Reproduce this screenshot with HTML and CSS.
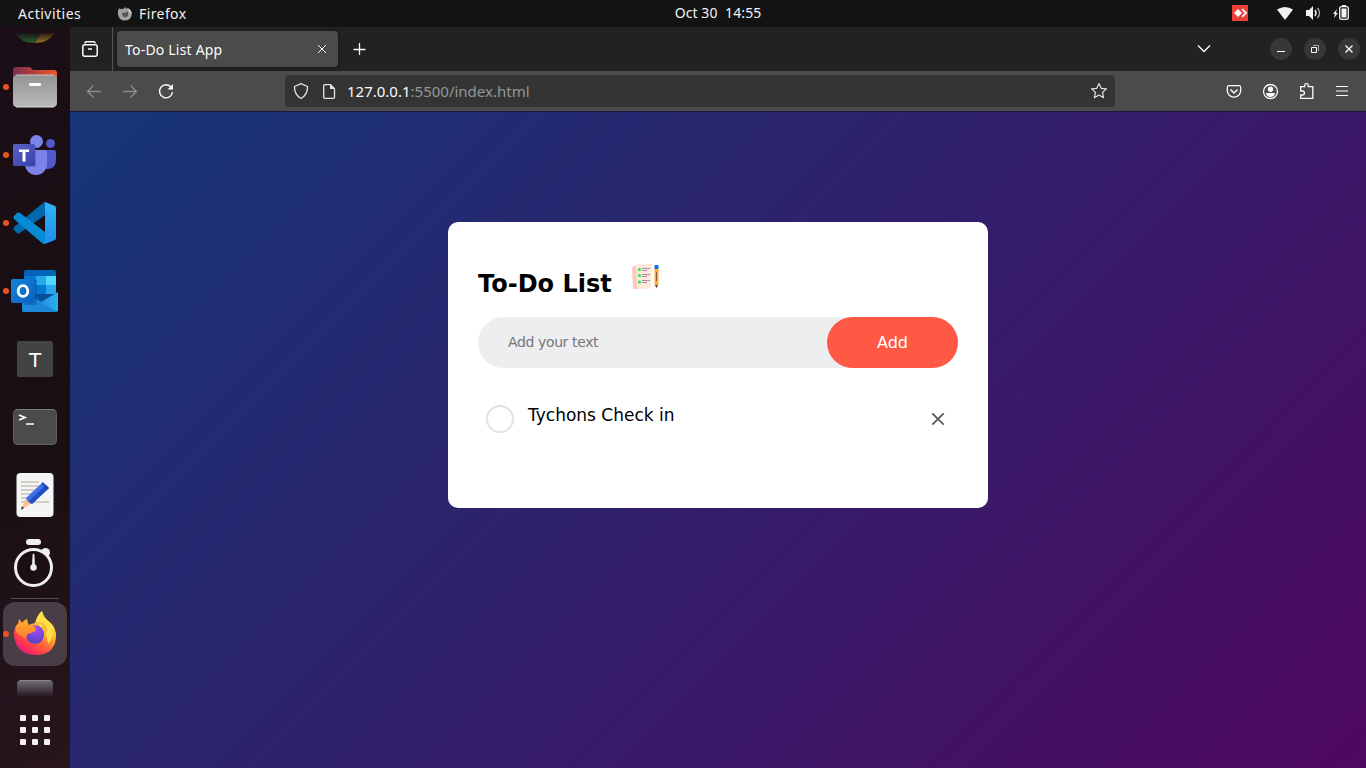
FILE: index.html
```html
<!DOCTYPE html>
<html lang="en">
<head>
<meta charset="utf-8">
<title>To-Do List App</title>
<link rel="stylesheet" href="styles.css">
</head>
<body>
<div class="desktop">
  <header class="topbar">
    <div class="topbar-left">
      <span class="activities">Activities</span>
      <svg class="app-icon" width="16" height="16" viewBox="0 0 16 16"><path d="M1 5 2.200 2l1 1.300L5 2.500l1 .9L8 1c.5 1.200 1.300 1.600 2 2l1-1c3 2 4 4 3.700 7A6.800 6.300 0 0 1 1.300 9.600C.8 8 1 6.500 1 5Z" fill="#a2a2a2"/><path d="M5 6.500 8 7l2-2c2 2.500 1.500 6-1.700 6.200C6 11.300 5 9 5 6.500Z" fill="#555"/><path d="m9 1 5 4 .7 3-2-1-1-3Z" fill="#d8d8d8"/></svg>
      <span class="app-name">Firefox</span>
    </div>
    <time class="clock">Oct 30&nbsp; 14:55</time>
    <div class="topbar-right">
      <svg width="134" height="27" viewBox="1232 0 134 27">
        <path fill="#ef3e36" d="M1232 5h16v16h-16z"/><path fill="#fff" d="m1238 9 4 4-4 4-4-4Zm3.500.7 1.200-1.200 4.500 4.500-4.500 4.500-1.200-1.200 3.200-3.300Z"/>
        <path fill="#f2f2f2" d="M1277 9.500q8-5 16 0L1285 20Z"/>
        <path fill="#f2f2f2" d="M1306 10h3l4-4v14l-4-4h-3Z"/><path d="M1315 10q2 3 0 6" fill="none" stroke="#eee" stroke-width="1.500"/><path d="M1317.500 8q4 5 0 10" fill="none" stroke="#aaa" stroke-width="1.300"/>
        <path fill="#f2f2f2" d="m1337 9-4 5h2l-1 4 4-5h-2Z"/><rect x="1339.700" y="6.700" width="8.600" height="12.600" rx="2" fill="none" stroke="#f2f2f2" stroke-width="1.300"/><path fill="#f2f2f2" d="M1341.500 8.500h5v9h-5zM1342 5h4v1.500h-4z"/>
      </svg>
    </div>
  </header>
  <div class="workspace">
    <nav class="dock">
      <svg class="dock-partial" width="70" height="26" viewBox="0 27 70 26"><defs><linearGradient id="fade" x1="0" y1="0" x2="0" y2="1"><stop offset="0" stop-color="#1b0f16"/><stop offset="1" stop-color="#1b0f16" stop-opacity="0"/></linearGradient></defs><path d="M15 33h26l-6 10q-13 1-20-10Z" fill="#24502b"/><path d="M41 33h14q-7 10-20 10Z" fill="#886223"/><path fill="url(#fade)" d="M14 32h43v9H14z"/></svg>
      <svg class="dock-icon" width="70" height="68" viewBox="0 53 70 68"><defs><linearGradient id="fold" x1="0" x2="1"><stop stop-color="#7c2c52"/><stop offset="1" stop-color="#ee5825"/></linearGradient><linearGradient id="front" x2="0" y2="1"><stop stop-color="#939393"/><stop offset="1" stop-color="#bababa"/></linearGradient></defs><circle class="dot" cx="6" cy="87" r="3"/><path d="M13 80V70q0-3 3-3h14l3 3h21q3 0 3 3v8Z" fill="url(#fold)"/><rect x="13" y="75" width="44" height="32" rx="4" fill="url(#front)"/><path d="M16 75h38" stroke="#c4c4c4"/><path d="M16 107h38" stroke="#ddd"/><rect x="29" y="83" width="12" height="3" rx="1" fill="#fff"/></svg>
      <svg class="dock-icon" width="70" height="68" viewBox="0 121 70 68"><defs><linearGradient id="tsq" x2="1" y2="1"><stop stop-color="#5a62c3"/><stop offset="1" stop-color="#3940ab"/></linearGradient></defs><circle class="dot" cx="6" cy="155" r="3"/><circle cx="50.500" cy="143.500" r="4.500" fill="#5059c9"/><path d="M43 150h11q2 0 2 2v8q0 9-9 9-4 0-6-3Z" fill="#5059c9"/><circle cx="36.500" cy="141.500" r="6.500" fill="#7b83eb"/><path d="M27 150h18q2 0 2 2v12a11 11 0 0 1-22 0v-12Z" fill="#7b83eb"/><path d="M26 146h10v21H26Z" fill="#414aad" opacity=".35"/><rect x="13" y="144" width="22" height="22" rx="1.500" fill="url(#tsq)"/><path d="M19 149.500h10v2.500h-3.500v9.500h-3V152H19Z" fill="#fff"/></svg>
      <svg class="dock-icon" width="70" height="68" viewBox="0 189 70 68"><defs><linearGradient id="vsc" x2="0" y2="1"><stop stop-color="#32b3f8"/><stop offset="1" stop-color="#1b8eea"/></linearGradient></defs><circle class="dot" cx="6" cy="223" r="3"/><path d="M43 203q1-1 2-1v13L20 233q-2 1-3 0l-3-3q-1-1 0-3Z" fill="#0069ac"/><path d="m14 216 3-3q1-1 3 0l25 19v12q-2 0-3-1L14 219q-1-2 0-3Z" fill="#078bd5"/><path d="m45 202 10 4q1 .5 1 2v30q0 1.500-1 2l-10 4Z" fill="url(#vsc)"/></svg>
      <svg class="dock-icon" width="70" height="68" viewBox="0 257 70 68"><defs><linearGradient id="mail" x2="1"><stop stop-color="#1477cf"/><stop offset="1" stop-color="#2caeee"/></linearGradient><linearGradient id="osq" x2="1" y2="1"><stop stop-color="#1784d9"/><stop offset="1" stop-color="#0a60bf"/></linearGradient></defs><circle class="dot" cx="6" cy="291" r="3"/><rect x="24" y="270" width="32" height="36" rx="2" fill="#0364b8"/><path d="M25 276h11v18H25z" fill="#0878cf"/><path d="M36 276h10v9H36z" fill="#28a8ea"/><path d="M46 276h10v9H46z" fill="#50d9ff"/><path d="M36 285h10v9H36z" fill="#0078d4"/><path d="M46 285h10v9H46z" fill="#28a8ea"/><path d="M36 294h20l-15 9Z" fill="#064f96"/><path d="m22 292 19 10 17-10v18q0 2-2 2H24q-2 0-2-2Z" fill="url(#mail)"/><path d="m22 292 35 19.500q-.5.500-1 .5H24q-2 0-2-2Z" fill="#1c88da"/><path d="M24 280h13v25H24Z" fill="#034682" opacity=".35"/><rect x="11" y="279" width="24" height="24" rx="2" fill="url(#osq)"/><ellipse cx="23" cy="291" rx="4.800" ry="5.300" fill="none" stroke="#fff" stroke-width="2.800"/></svg>
      <div class="dock-letter"><span>T</span></div>
      <svg class="dock-icon" width="70" height="68" viewBox="0 393 70 68"><rect x="13.500" y="409.500" width="43" height="35" rx="4" fill="#4b4b4b" stroke="#606060"/><path d="M16 409.500h38" stroke="#777"/><path d="m19 415 6 2.500-6 2.500M26 424h8" fill="none" stroke="#fff" stroke-width="1.700"/></svg>
      <svg class="dock-icon" width="70" height="68" viewBox="0 461 70 68"><rect x="16.500" y="473" width="37" height="44" rx="4" fill="#f5f5f5"/><path d="M21 482h18M21 486h19M21 490h13M21 494h11M21 498h9M21 502h28" stroke="#c3c1b8" stroke-width="1.600"/><path d="m26 498 6 5-11 7Z" fill="#f9c18b"/><path d="m22 506 2 2-3 2Z" fill="#333"/><path d="m26 498 17-16 6 6-17 16q-4-1-6-6Z" fill="#3e70ea"/><path d="m29 501 17-16 3 3-17 16Z" fill="#204dc3"/><path d="m42 483 6 6" stroke="#193b9e" stroke-width="1.300"/></svg>
      <svg class="dock-icon" width="70" height="68" viewBox="0 529 70 68"><rect x="26" y="539" width="15" height="6" rx="3" fill="#f0eff0"/><circle cx="45.500" cy="552.500" r="4.500" fill="#f0eff0"/><circle cx="33.500" cy="567.500" r="18" fill="#1b0f16" stroke="#f0eff0" stroke-width="3"/><path d="M33 554h1l.8 13h-2.600Z" fill="#f0eff0" stroke="#f0eff0" stroke-width=".6"/><circle cx="33.500" cy="567.500" r="3.200" fill="#f0eff0"/></svg>
      <div class="dock-separator"></div>
      <div class="dock-active"><svg width="64" height="64" viewBox="3 602 64 64"><defs><linearGradient id="fox" x1=".85" y1=".1" x2=".25" y2="1"><stop stop-color="#ffe84a"/><stop offset=".3" stop-color="#ffc334"/><stop offset=".55" stop-color="#ff7138"/><stop offset=".8" stop-color="#ff3750"/><stop offset="1" stop-color="#e31587"/></linearGradient><linearGradient id="head" x2="0" y2="1"><stop stop-color="#ffb02e"/><stop offset="1" stop-color="#ff7a2c"/></linearGradient><radialGradient id="globe" cx=".55" cy=".2" r=".8"><stop stop-color="#a64af5"/><stop offset="1" stop-color="#5543c4"/></radialGradient></defs><circle class="dot" cx="6" cy="634" r="3"/><path d="M14 634q0-6 4-10l1-5 3 4q2-2 5-4l1 6 7-2q2-8 7-12 1 5 5 9 7 5 9 13 1 22-21 22-20-1-21-21Z" fill="url(#fox)"/><path d="M36 623q1-8 6-12 0 5 5 9 6 4 8 10-2-2-3-2 2 10-4 16 0-12-12-21Z" fill="#ffe147"/><ellipse cx="35" cy="634.500" rx="9.200" ry="9.500" fill="url(#globe)"/><path d="M15 628q1-3 4-5V619l3 4q2-3 5-4 0 4 2 6l6 1q-1 2 1 3 0 3-8 5-2 2-2 5-2 0-4-3-5 0-7-8Z" fill="url(#head)"/><path d="M35 626q5-3 8-1-2 1 0 3 3 5 0 11 7-7 2-14-4-4-10-2Z" fill="#ffb52f"/></svg></div>
      <svg width="70" height="102" viewBox="0 666 70 102"><defs><linearGradient id="tray" x2="0" y2="1"><stop stop-color="#737074"/><stop offset="1" stop-color="#2a1c25"/></linearGradient></defs><path d="M17 696v-12q0-4 4-4h28q4 0 4 4v12Z" fill="url(#tray)"/><path d="M20 680.500h30" stroke="#8c898c"/><g fill="#f3f1f2"><rect x="20" y="715" width="6" height="6" rx="1"/><rect x="32" y="715" width="6" height="6" rx="1"/><rect x="44" y="715" width="6" height="6" rx="1"/><rect x="20" y="727" width="6" height="6" rx="1"/><rect x="32" y="727" width="6" height="6" rx="1"/><rect x="44" y="727" width="6" height="6" rx="1"/><rect x="20" y="739" width="6" height="6" rx="1"/><rect x="32" y="739" width="6" height="6" rx="1"/><rect x="44" y="739" width="6" height="6" rx="1"/></g></svg>
    </nav>
    <main class="browser">
      <div class="tabstrip">
        <div class="recent"><svg width="18" height="18" viewBox="0 0 18 18" fill="none" stroke="#fbfbfe" stroke-width="1.500"><path d="M3.500 3.200 5 1.800h8l1.500 1.400"/><rect x="1.800" y="4.800" width="14.400" height="11.400" rx="2"/><path d="M7 9h4"/></svg></div>
        <div class="tab"><span class="tab-title">To-Do List App</span><svg width="10" height="10" viewBox="0 0 10 10"><path d="m1 1 8 8M9 1 1 9" stroke="#fbfbfe" stroke-width="1"/></svg></div>
        <svg class="new-tab" width="14" height="14" viewBox="0 0 14 14"><path d="M6.500 1v12M.5 7.500h12" stroke="#fbfbfe" stroke-width="1.300"/></svg>
        <svg class="window-controls" width="206" height="44" viewBox="1160 27 206 44" fill="none" stroke="#fbfbfe"><path d="m1198 45.500 6 6 6-6" stroke-width="1.400"/><g fill="#373737" stroke="none"><circle cx="1281" cy="49" r="11"/><circle cx="1315" cy="49" r="11"/><circle cx="1349" cy="49" r="11"/></g><path d="M1277 51.500h8"/><path d="M1311.500 47.500h5v5h-5z"/><path d="M1313 45.500h5.500v5.500" stroke="#aaa"/><path d="m1345.500 45.500 7 7m0-7-7 7" stroke-width="1.400"/></svg>
      </div>
      <div class="toolbar">
        <svg class="nav-buttons" width="215" height="40" viewBox="70 71 215 40" fill="none" stroke-width="1.300"><path d="M101 91.500H87.500m6-6-6 6 6 6M123 91.500h13.500m-6-6 6 6-6 6" stroke="#8d8d8d"/><path d="M171.300 87.500a6.500 6.500 0 1 0 1.200 4.500" stroke="#fbfbfe" stroke-width="1.400"/><path d="M173 84v5.500h-5.500Z" fill="#fbfbfe"/></svg>
        <div class="urlbar">
          <svg width="62" height="32" viewBox="285 75 62 32" fill="none" stroke="#e4e4e5" stroke-width="1.300"><path d="m301 83.700 6.500 2.800c.3 5.500-1.500 9-6.500 12-5-3-6.800-6.500-6.500-12Z" stroke-linejoin="round"/><path d="M324.700 84.700h5.800l4 4v8.600q0 1-1 1h-8.800q-1 0-1-1v-11.600q0-1 1-1Z"/><path d="M330 84v5h5Z" fill="#e4e4e5" stroke="none"/></svg>
          <span class="url"><b>127.0.0.1</b>:5500/index.html</span>
          <svg class="star" width="18" height="18" viewBox="0 0 18 18"><path d="m9 1.500 2.200 4.800 5.200.6-3.900 3.500 1.100 5.300L9 13.100l-4.600 2.600 1.100-5.300-3.900-3.500 5.200-.6Z" fill="none" stroke="#e4e4e5" stroke-width="1.200" stroke-linejoin="round"/></svg>
        </div>
        <svg class="tool-buttons" width="146" height="40" viewBox="1220 71 146 40" fill="none" stroke="#fbfbfe" stroke-width="1.300"><path d="M1229 85.700h10q1.700 0 1.700 1.700v3.100a6.700 6.700 0 0 1-13.400 0v-3.100q0-1.700 1.700-1.700Z"/><path d="m1230.500 89.500 3.500 3.500 3.500-3.500" stroke-width="1.500"/><circle cx="1270.500" cy="91.500" r="7"/><circle cx="1270.500" cy="89.300" r="2.700" fill="#fbfbfe" stroke="none"/><path d="M1266 93h9q-.5 4-4.500 4t-4.500-4Z" fill="#fbfbfe" stroke="none"/><path d="M1300.700 91v-4.300h4v-1.200a1.800 1.800 0 0 1 3.600 0v1.200h4.500v11.600h-12.100V95h1.700a2 2 0 0 0 0-4Z"/><path d="M1336 86.500h12M1336 91h12M1336 95.500h12" stroke-width="1.200"/></svg>
      </div>
      <div class="page">
        <section class="todo-app">
          <h1 class="heading"><span>To-Do List</span><svg width="30" height="30" viewBox="0 0 30 30"><path d="m2 4 5-2 12 22q-1 2-4 2L3 26Z" fill="#ffc9c0"/><path d="M6 1h16l-1 23q-1 2-4 2L7 26Z" fill="#ffe7da"/><g fill="#18e94b"><circle cx="9.500" cy="6.500" r="1.600"/><circle cx="9.500" cy="12.500" r="1.600"/><circle cx="9.500" cy="19" r="1.600"/></g><path d="M12 5.500h8M12 7.500h5M12 11.500h8M12 13.500h5M12 17.500h8M12 19.500h5" stroke="#ad8bac"/><path d="M24.500 5h4v16l-2 4-2-4Z" fill="#ffab3d"/><path d="M26.500 9v9" stroke="#8e6040"/><rect x="24.500" y="2" width="4" height="4" rx="1" fill="#0868f8"/><path d="m25 22 1.500 3 1.500-3Z" fill="#5b3b44"/></svg></h1>
          <div class="entry"><input class="entry-text" type="text" placeholder="Add your text"><button class="add">Add</button></div>
          <ul class="tasks"><li class="task"><span class="check"></span><span class="task-text">Tychons Check in</span><svg class="remove" width="14" height="14" viewBox="0 0 14 14"><path d="m1.300 1.300 11.400 11.400M12.700 1.300 1.300 12.700" stroke="#555" stroke-width="1.700"/></svg></li></ul>
        </section>
      </div>
    </main>
  </div>
</div>
</body>
</html>
```
FILE: styles.css
```css
* { box-sizing: border-box; margin: 0; padding: 0; }
body { width: 1366px; height: 768px; overflow: hidden; font-family: "DejaVu Sans", sans-serif; }
svg { display: block; flex: none; }
.desktop { display: flex; flex-direction: column; height: 768px; }
.topbar { display: grid; grid-template-columns: 1fr auto 1fr; height: 27px; background: #131313; color: #f2f2f2; font: 14px/26px "Noto Sans", sans-serif; }
.topbar-left { display: flex; align-items: center; }
.activities { width: 99px; padding-left: 18px; letter-spacing: .5px; }
.app-icon { margin-left: 18px; }
.app-name { padding-left: 6px; letter-spacing: .4px; }
.clock { white-space: pre; letter-spacing: .1px; padding-left: 70px; }
.topbar-right { display: flex; justify-content: flex-end; }
.workspace { display: flex; height: 741px; }
.dock { width: 70px; flex: none; background: linear-gradient(165deg, #1b0e16, #1a0f15 60%, #28151e); }
.dot { fill: #e95420; }
.dock-letter { height: 68px; display: grid; place-items: center; }
.dock-letter span { width: 36px; height: 36px; border-radius: 2px; background: #434343; color: #fff; font: 20px/38px "DejaVu Sans", sans-serif; text-align: center; }
.dock-separator { width: 48px; height: 1px; margin: 1px 11px 3px; background: #514850; }
.dock-active { width: 64px; height: 64px; margin-left: 3px; border-radius: 12px; background: #493e45; }
.browser { width: 1296px; }
.tabstrip { height: 44px; display: flex; align-items: center; background: #222; }
.recent { width: 43px; height: 44px; border-right: 1px solid #555; display: flex; align-items: center; padding-left: 11px; }
.tab { width: 221px; height: 36px; margin-left: 4px; padding: 0 11px 0 8px; border-radius: 4px; display: flex; align-items: center; justify-content: space-between; background: #4b4b4b; color: #fbfbfe; box-shadow: 0 0 3px #111; }
.tab-title { font: 14px/36px "Noto Sans", sans-serif; letter-spacing: .2px; padding-top: 1px; }
.new-tab { margin-left: 15px; }
.window-controls { margin-left: auto; }
.toolbar { height: 40px; display: flex; align-items: center; background: #4b4b4b; }
.urlbar { width: 830px; height: 32px; border-radius: 4px; background: #343434; display: flex; align-items: center; }
.url { color: #969697; font: 15px/32px "Noto Sans", sans-serif; }
.url b { font-weight: 400; color: #fbfbfe; }
.star { margin: 0 7px 0 auto; }
.tool-buttons { margin-left: auto; }
.page { height: 657px; padding: 110px 378px 0; border-top: 1px solid #19183c; background: linear-gradient(135deg, #153677, #4e085f) border-box; }
.todo-app { width: 540px; height: 286px; padding: 40px 30px 0; border-radius: 10px; background: #fff; }
.heading { height: 30px; margin-bottom: 25px; display: flex; align-items: flex-start; }
.heading span { width: 152px; font-size: 24px; line-height: 28px; padding-top: 8px; }
.heading svg { margin-top: 1px; }
.entry { height: 51px; display: flex; border-radius: 26px; background: #edeef0; }
.entry-text { width: 349px; padding: 0 30px 2px; border: 0; outline: 0; background: transparent; font: 14px "DejaVu Sans", sans-serif; letter-spacing: -.38px; color: #111; }
.entry-text::placeholder { color: #757575; opacity: 1; }
.add { width: 131px; border: 0; border-radius: 26px; background: #ff5945; color: #fff; font: 16px "DejaVu Sans", sans-serif; }
.tasks { list-style: none; padding-top: 36px; }
.task { display: flex; height: 40px; padding: 0 13px 0 8px; }
.check { width: 28px; height: 28px; margin-top: 1px; border: 2px solid #e2e2e2; border-radius: 50%; }
.task-text { margin-left: 14px; font-size: 17px; line-height: 22px; }
.remove { margin: 8px 0 0 auto; }
```
